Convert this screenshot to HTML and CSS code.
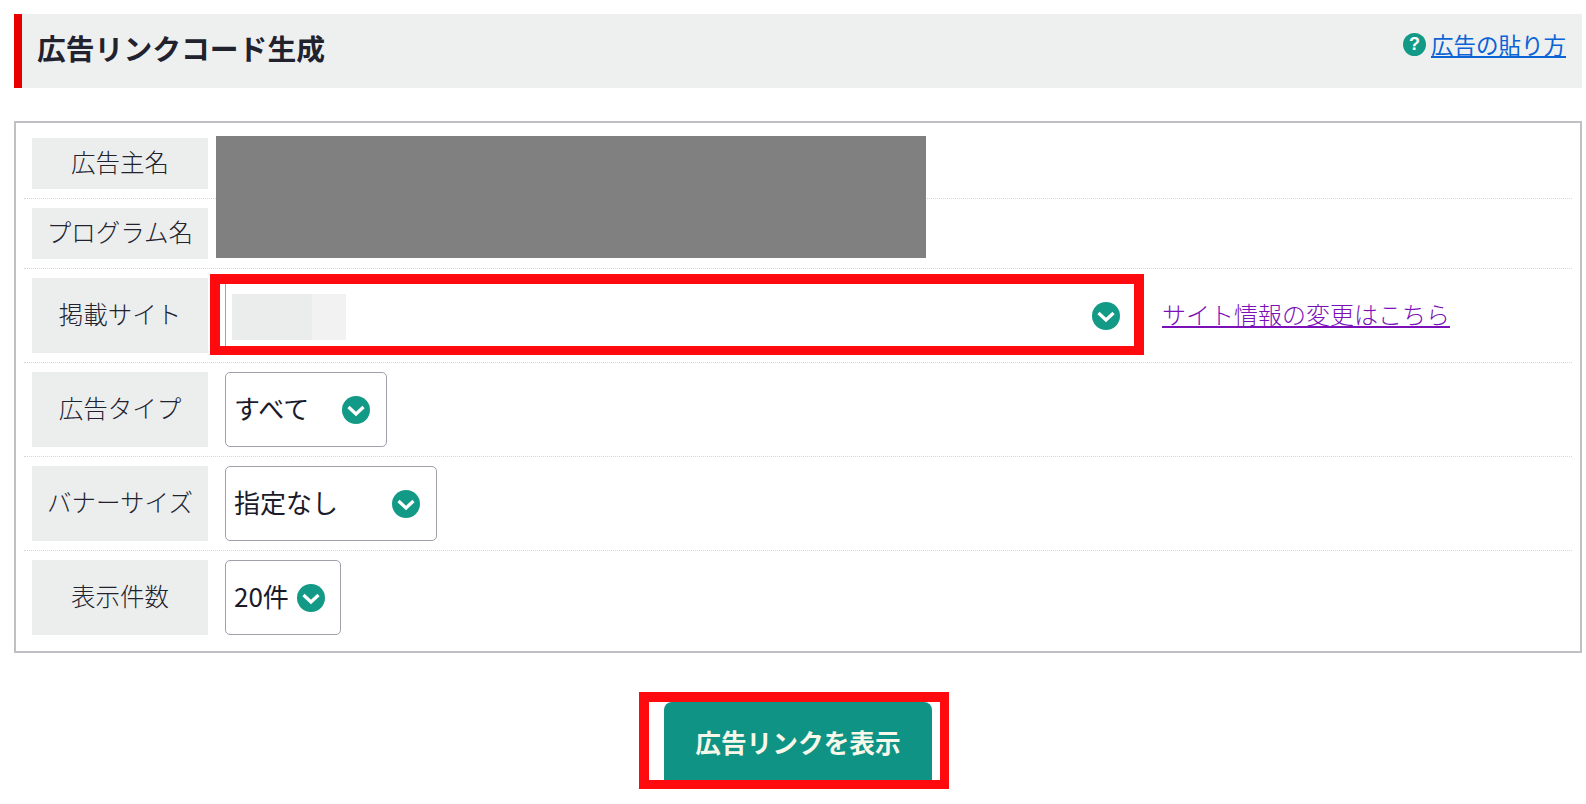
FILE: index.html
```html
<!DOCTYPE html>
<html lang="ja">
<head>
    <meta charset="UTF-8">
    <meta name="viewport" content="width=device-width, initial-scale=1.0">
    <title>広告リンクコード生成</title>
    <link rel="stylesheet" href="styles.css">
</head>
<body>
    <div class="page-header">
        <h1>広告リンクコード生成</h1>
        <div class="help">
            <span class="help-icon">?</span>
            <a href="#" class="help-link">広告の貼り方</a>
        </div>
    </div>

    <div class="form-box">
        <div class="redacted"></div>
        <div class="row">
            <div class="label label-short">広告主名</div>
        </div>
        <div class="row">
            <div class="label label-short">プログラム名</div>
        </div>
        <div class="row">
            <div class="label">掲載サイト</div>
            <div class="select select-site">
                <span class="site-blur"></span>
                <svg class="arrow" viewBox="0 0 28 28"><circle cx="14" cy="14" r="14"/><path d="M6.5 11 14 18 21.5 11"/></svg>
                <span class="mark mark-site"></span>
            </div>
            <a href="#" class="site-link">サイト情報の変更はこちら</a>
        </div>
        <div class="row">
            <div class="label">広告タイプ</div>
            <div class="select select-type">
                <span class="select-text">すべて</span>
                <svg class="arrow" viewBox="0 0 28 28"><circle cx="14" cy="14" r="14"/><path d="M6.5 11 14 18 21.5 11"/></svg>
            </div>
        </div>
        <div class="row">
            <div class="label">バナーサイズ</div>
            <div class="select select-size">
                <span class="select-text">指定なし</span>
                <svg class="arrow" viewBox="0 0 28 28"><circle cx="14" cy="14" r="14"/><path d="M6.5 11 14 18 21.5 11"/></svg>
            </div>
        </div>
        <div class="row">
            <div class="label">表示件数</div>
            <div class="select select-count">
                <span class="select-text">20件</span>
                <svg class="arrow" viewBox="0 0 28 28"><circle cx="14" cy="14" r="14"/><path d="M6.5 11 14 18 21.5 11"/></svg>
            </div>
        </div>
    </div>

    <div class="actions">
        <div class="submit-wrap">
            <button class="submit">広告リンクを表示</button>
            <span class="mark mark-submit"></span>
        </div>
    </div>
</body>
</html>
```

FILE: styles.css
```css
* {
    box-sizing: border-box;
    padding: 0;
    margin: 0;
}

body {
    font-family: "Noto Sans CJK JP", "Liberation Sans", sans-serif;
    padding: 14px 4px 0 14px;
    height: 804px;
    overflow: hidden;
    background-color: #fff;
    color: #2b2b38;
}

.page-header {
    display: flex;
    justify-content: space-between;
    align-items: flex-start;
    height: 74px;
    padding: 0 16px 0 15px;
    background-color: #eef0f0;
    border-left: 8px solid #e60000;
}

h1 {
    font-size: 28.8px;
    line-height: 68px;
    font-weight: bold;
    color: #22222e;
}

.help {
    display: flex;
    align-items: center;
    gap: 5px;
    height: 60px;
}

.help-icon {
    display: flex;
    justify-content: center;
    align-items: center;
    width: 23px;
    height: 23px;
    border-radius: 50%;
    background-color: #129a86;
    color: #fff;
    font-family: "Liberation Sans", sans-serif;
    font-size: 18px;
    font-weight: bold;
}

.help-link {
    padding-bottom: 1px;
    font-size: 22.5px;
    color: #0b63d6;
}

.form-box {
    position: relative;
    margin-top: 33px;
    padding: 6px 8px 7px 8px;
    border: 2px solid #c0c0c4;
}

.redacted {
    position: absolute;
    z-index: 1;
    top: 13px;
    left: 200px;
    width: 710px;
    height: 122px;
    background-color: #808080;
}

.row {
    display: flex;
    align-items: center;
    padding: 9px 0 9px 8px;
    border-bottom: 1px dotted #d6d6da;
}

.row:last-child {
    border-bottom: none;
}

.label {
    display: flex;
    justify-content: center;
    align-items: center;
    flex-shrink: 0;
    width: 176px;
    height: 75px;
    margin-right: 17px;
    padding-bottom: 4px;
    background-color: #eceeee;
    font-size: 24.5px;
    font-weight: 300;
    color: #22222e;
}

.label-short {
    height: 51px;
}

.select {
    position: relative;
    display: flex;
    justify-content: space-between;
    align-items: center;
    height: 75px;
    padding: 0 16px 0 9px;
    border: 1px solid #a0a0ac;
    border-radius: 5px;
    font-size: 26px;
    color: #1a1a2a;
}

.select-text {
    padding-bottom: 5px;
    margin-left: -1px;
}

.select-site {
    width: 912px;
    padding-left: 6px;
}

.select-type {
    width: 162px;
}

.select-size {
    width: 212px;
}

.select-count {
    width: 116px;
    padding-right: 15px;
}

.site-blur {
    width: 114px;
    height: 46px;
    margin-top: 2px;
    background: linear-gradient(to right, #ebecec 70%, #f1f2f1 70%);
}

.arrow {
    flex-shrink: 0;
    width: 28px;
    height: 28px;
}

.arrow circle {
    fill: #129a86;
}

.arrow path {
    fill: none;
    stroke: #fff;
    stroke-width: 3.2;
}

.site-link {
    margin-left: 25px;
    padding-bottom: 4px;
    font-size: 24px;
    font-weight: 300;
    color: #7c10b8;
}

.mark {
    position: absolute;
    border: solid #ff0a0f;
}

.mark-site {
    top: -5px;
    right: -8px;
    bottom: -3px;
    left: -16px;
    border-width: 10px 10px 9px 10px;
}

.actions {
    display: flex;
    justify-content: center;
    margin-top: 49px;
}

.submit-wrap {
    position: relative;
}

.submit {
    display: block;
    width: 268px;
    height: 86px;
    padding-bottom: 8px;
    border: none;
    border-radius: 8px;
    background-color: #0f9384;
    color: #f7f7ea;
    font-family: inherit;
    font-size: 25.7px;
    font-weight: bold;
}

.mark-submit {
    top: -10px;
    right: -17px;
    bottom: -1px;
    left: -25px;
    border-width: 10px 9px 9px 10px;
}
```
